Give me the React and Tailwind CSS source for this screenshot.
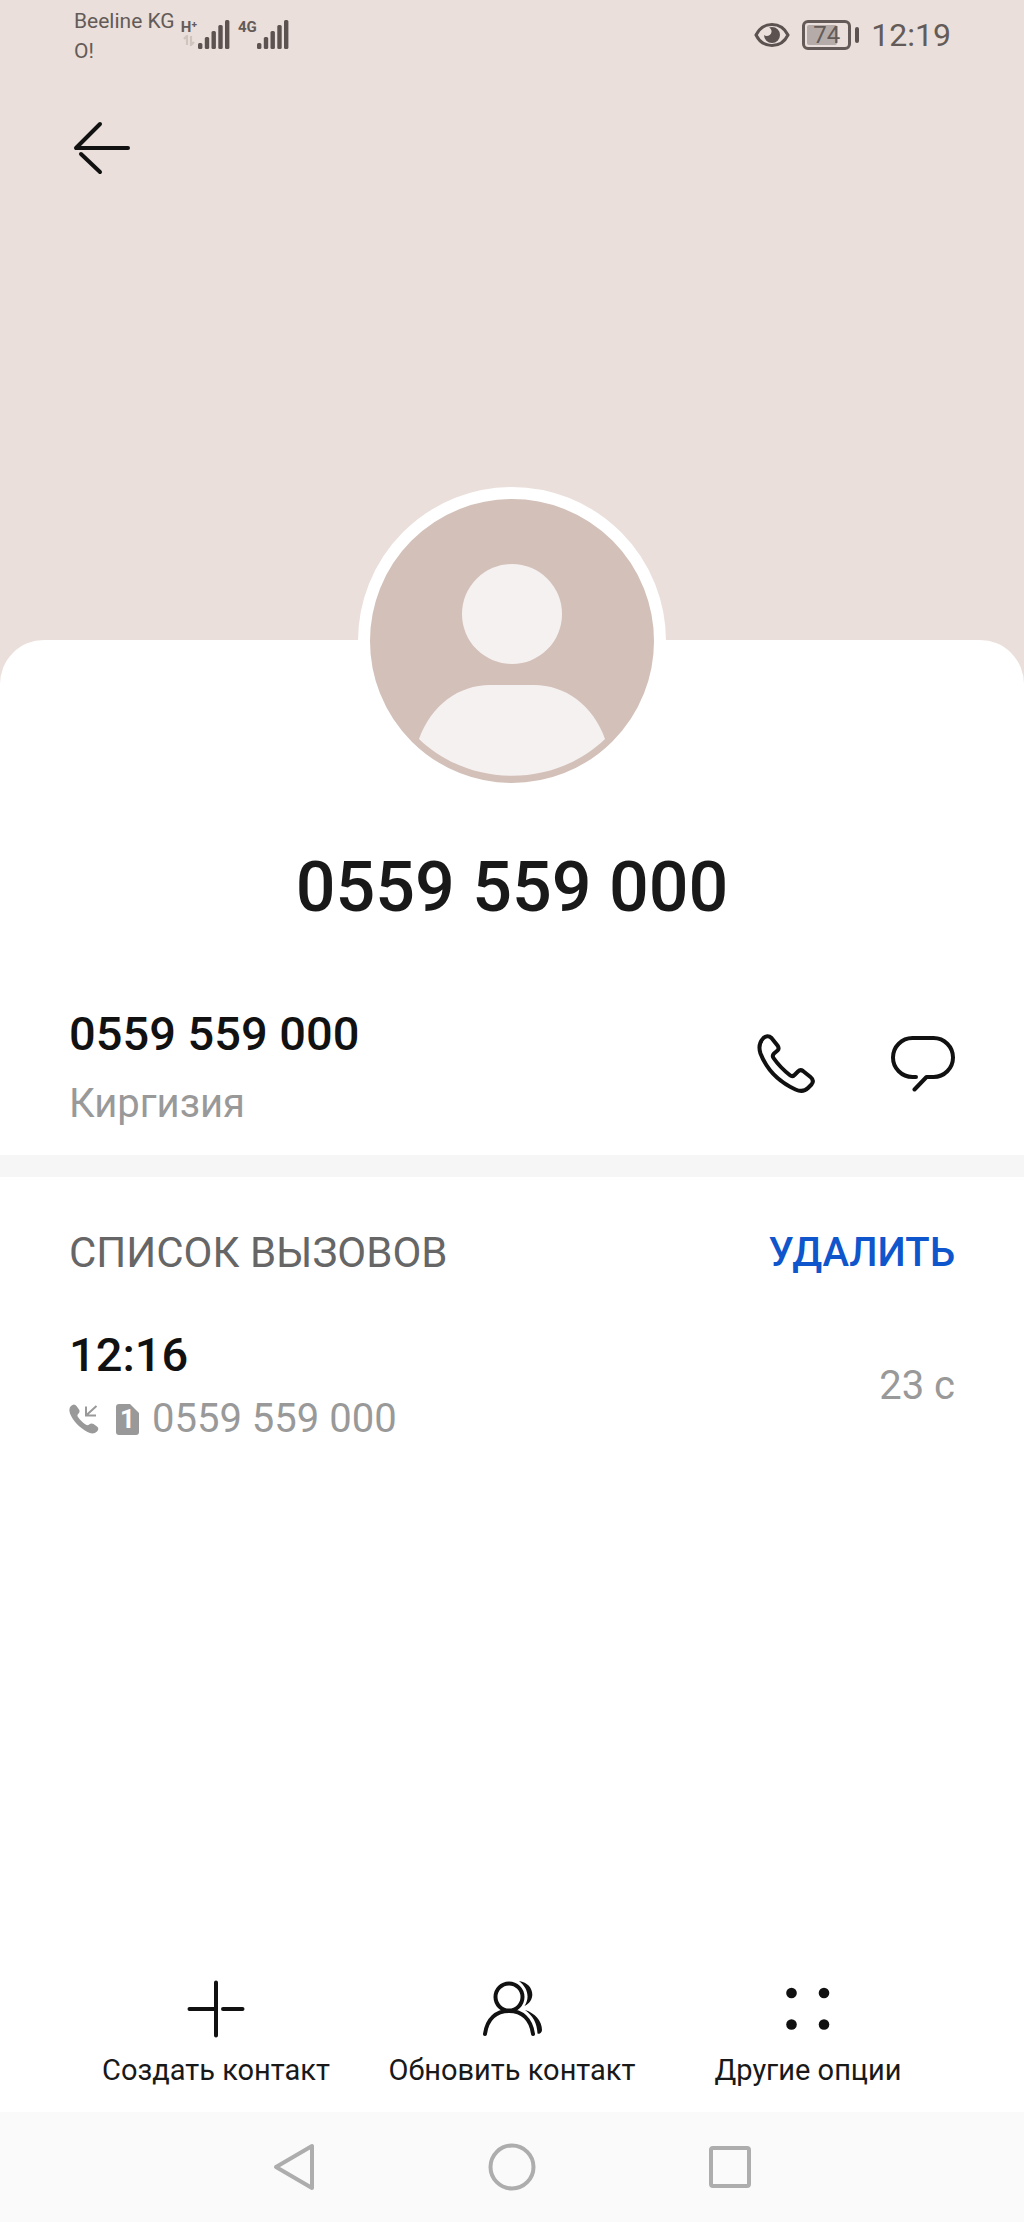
const calls = [
  { id: 1, time: "12:16", number: "0559 559 000", sim: 1, duration: "23 с" },
];

const SignalBars = () => (
  <svg width="32" height="30" viewBox="0 0 32 30" fill="#5c5250">
    <rect x="0" y="24" width="4.4" height="6" rx="1.5" />
    <rect x="6.8" y="18" width="4.4" height="12" rx="1.5" />
    <rect x="13.5" y="12" width="4.4" height="18" rx="1.5" />
    <rect x="20.3" y="6" width="4.4" height="24" rx="1.5" />
    <rect x="27" y="1" width="4.4" height="29" rx="1.5" />
  </svg>
);

const StatusBar = () => (
  <div className="flex h-[72px] items-start justify-between pl-[74px] pr-[73px] text-[#645b58]">
    <div className="flex items-start">
      <div className="w-[106px] whitespace-nowrap pt-[6px] text-[21px] leading-[30px]">
        <p>Beeline KG</p>
        <p>О!</p>
      </div>
      <div className="flex pt-[19px]">
        <div className="flex w-[18px] flex-col items-center">
          <span className="text-[15px] font-bold leading-[16px]">H⁺</span>
          <svg width="12" height="11" viewBox="0 0 12 11" fill="none" stroke="#cfc4be" strokeWidth="2.2">
            <path d="M1 4 L4 1 V10 M8 1 V10 L11 7" />
          </svg>
        </div>
        <SignalBars />
        <span className="ml-[8px] w-[19px] text-[15px] font-bold leading-[16px]">4G</span>
        <SignalBars />
      </div>
    </div>
    <div className="flex h-[70px] items-center">
      <svg width="36" height="26" viewBox="0 0 36 26" fill="none">
        <path d="M2 13 C9 -1 27 -1 34 13 C27 27 9 27 2 13 Z" stroke="#5c5250" strokeWidth="3" />
        <path d="M18 5 A8 8 0 1 1 10 13 C12 15 17 14 17.5 10 C18 8 16 6 15 5.6 Z" fill="#5c5250" />
      </svg>
      <div className="ml-[12px] flex h-[30px] w-[49px] items-center rounded-[6px] border-[3px] border-[#645b58] p-[2px]">
        <div className="flex h-full w-[30px] items-center whitespace-nowrap rounded-[2px] bg-[#b5acaa] pl-[6px] text-[24px]">
          74
        </div>
      </div>
      <div className="ml-[4px] h-[16px] w-[4px] rounded-sm bg-[#5c5250]" />
      <span className="ml-[12px] text-[32px]">12:19</span>
    </div>
  </div>
);

const Avatar = () => (
  <div className="mx-auto -mt-[153px] h-[308px] w-[308px] rounded-full border-[12px] border-white bg-[#d3c0b9]">
    <svg className="h-full w-full" viewBox="0 0 284 284" fill="#f5f1f0">
      <circle cx="142" cy="115" r="50" />
      <path d="M49 240 C61 206 89 186 120 186 H164 C195 186 223 206 235 240 C184 289 100 289 49 240 Z" />
    </svg>
  </div>
);

const PhoneIcon = () => (
  <svg width="58" height="59" viewBox="0 0 58 59" fill="none" stroke="#111" strokeWidth="4" strokeLinejoin="round">
    <path d="M6 4.5 C8.500 1.500 12 1.500 14.500 4 L20.500 11.500 C22 13.500 22 15 20.500 16.500 L17 19.500 C15.500 21 15.500 22.500 16.500 24 C21 30.500 27 36.500 33 41.300 C34.500 42.500 36 42.500 37.500 41 L41 37.500 C42.500 36 44.300 35.800 46 37 L53.500 43 C56.500 45.500 56.500 48 54.500 50.500 L51 54 C48 57 43 57.500 38.500 55.500 C22 48 9.500 35 3.500 19.500 C1.500 13.500 2 9 6 4.500 Z" />
  </svg>
);

const MessageIcon = () => (
  <svg width="64" height="57" viewBox="0 0 64 57" fill="none" stroke="#111" strokeWidth="4" strokeLinecap="round" strokeLinejoin="round">
    <path d="M25 42 H21.500 A19.500 19.500 0 0 1 21.500 3 H42.500 A19.500 19.500 0 0 1 42.500 42 H35.500 L23.500 54.500" />
  </svg>
);

const IncomingCallIcon = () => (
  <svg width="30" height="30" viewBox="0 0 30 30" fill="none">
    <path d="M2 2 C4 0 6 0 7.500 2 L10 5.500 C11 7 10.500 8.500 9.500 9.500 C8 11 8.300 12 9 13 C11 16 14 19 17 20.800 C18.300 21.500 19.200 21.500 20.500 20.300 C21.500 19.300 23 19 24.500 20 L28 22.500 C30 24 29.500 26 28 27.500 C25.500 30 22 30 18.500 28 C10.500 23.500 4 17 1 9.500 C0 6.500 0 4 2 2 Z" fill="#999" />
    <path d="M27.500 2 L17 11.500 M17 2.500 V11.500 H27" stroke="#999" strokeWidth="2" />
  </svg>
);

// sim card outline with the slot number inside
const SimBadge = ({ slot }) => (
  <span className="relative flex h-[31px] w-[23px] items-center justify-center">
    <svg className="absolute inset-0" width="23" height="31" viewBox="0 0 23 31" fill="#999">
      <path d="M3 0 H14 L23 9 V28 Q23 31 20 31 H3 Q0 31 0 28 V3 Q0 0 3 0 Z" />
    </svg>
    <span className="relative text-[26px] font-bold leading-none text-white">{slot}</span>
  </span>
);

const PlusIcon = () => (
  <svg width="58" height="58" viewBox="0 0 58 58" stroke="#111" strokeWidth="4" strokeLinecap="round">
    <path d="M29 2.500 V55.500 M2.500 29 H28 M36 29 H55.500" />
  </svg>
);

const PeopleIcon = () => (
  <svg width="62" height="58" viewBox="0 0 62 58" fill="none" stroke="#111" strokeWidth="4" strokeLinecap="round">
    <circle cx="28" cy="17" r="13.500" />
    <path d="M4 54 C6 39 15 31 28 31 C41 31 50 39 52 54" />
    <path d="M38 1 C53 3 56 20 43.500 26 C49 18 47 8 38 1 Z M44 30 C54 33 61 41 61 50 C61 53 58 54.500 56.500 53.500 C56 43 52 36 44 30 Z" fill="#111" stroke="none" />
  </svg>
);

const DotsIcon = () => (
  <svg width="58" height="58" viewBox="0 0 58 58" fill="#111">
    <circle cx="12.500" cy="13" r="5.300" />
    <circle cx="45" cy="13" r="5.300" />
    <circle cx="12.500" cy="44.500" r="5.300" />
    <circle cx="45" cy="44.500" r="5.300" />
  </svg>
);

const actions = [
  { label: "Создать контакт", icon: <PlusIcon /> },
  { label: "Обновить контакт", icon: <PeopleIcon /> },
  { label: "Другие опции", icon: <DotsIcon /> },
];

const NavBar = () => (
  <nav className="grid h-[110px] grid-cols-3 items-center bg-[#fafafa] px-[18%]">
    <button aria-label="Back" className="flex justify-center">
      <svg width="42" height="48" viewBox="0 0 42 48" fill="none" stroke="#adadad" strokeWidth="4" strokeLinejoin="round">
        <path d="M39 3 V45 L3 24 Z" />
      </svg>
    </button>
    <button aria-label="Home" className="flex justify-center">
      <svg width="48" height="48" viewBox="0 0 48 48" fill="none" stroke="#adadad" strokeWidth="4">
        <circle cx="24" cy="24" r="21.500" />
      </svg>
    </button>
    <button aria-label="Recent" className="flex justify-center">
      <svg width="44" height="44" viewBox="0 0 44 44" fill="none" stroke="#adadad" strokeWidth="4">
        <rect x="3" y="3" width="38" height="38" rx="2" />
      </svg>
    </button>
  </nav>
);

const App = () => {
  return (
    <div className="flex min-h-screen flex-col bg-[#eadfda] font-[Roboto,'Noto_Sans',sans-serif]">
      <header className="h-[640px]">
        <StatusBar />
        <button aria-label="Назад" className="ml-[73px] mt-[48px] block">
          <svg width="58" height="56" viewBox="0 0 58 56" fill="none" stroke="#111" strokeWidth="4" strokeLinecap="round" strokeLinejoin="round">
            <path d="M27 4 L3 28 H55 M8 34 L27 52" />
          </svg>
        </button>
      </header>

      <main className="flex flex-1 flex-col rounded-t-[44px] bg-white">
        <Avatar />
        <h1 className="mt-[50px] text-center text-[70px] font-medium leading-[84px] text-[#191919]">
          0559 559 000
        </h1>

        <section className="mt-[75px] flex items-start justify-between px-[69px]">
          <div>
            <p className="text-[47px] font-medium leading-[60px] text-[#111]">0559 559 000</p>
            <p className="mt-[12px] text-[40px] leading-[56px] text-[#999]">Киргизия</p>
          </div>
          <div className="flex items-center gap-[76px] pt-[30px]">
            <button aria-label="Позвонить"><PhoneIcon /></button>
            <button aria-label="Сообщение"><MessageIcon /></button>
          </div>
        </section>

        <div className="mt-[23px] h-[22px] bg-[#f6f6f6]" />

        <section className="px-[69px] pt-[48px]">
          <div className="flex items-center justify-between leading-[56px]">
            <h2 className="text-[42px] text-[#666]">СПИСОК ВЫЗОВОВ</h2>
            <button className="text-[40px] font-medium text-[#0f55cc]">УДАЛИТЬ</button>
          </div>
          <ul className="mt-[44px]">
            {calls.map((call) => (
              <li key={call.id} className="flex items-center justify-between">
                <div>
                  <p className="text-[47px] font-medium leading-[60px] text-[#111]">{call.time}</p>
                  <div className="mt-[6px] flex items-center text-[40px] leading-[56px] text-[#999]">
                    <IncomingCallIcon />
                    <span className="ml-[17px] mr-[13px]"><SimBadge slot={call.sim} /></span>
                    {call.number}
                  </div>
                </div>
                <span className="text-[40px] text-[#999]">{call.duration}</span>
              </li>
            ))}
          </ul>
        </section>

        <div className="mt-auto grid grid-cols-3 px-[68px] pb-[24px] pt-[24px]">
          {actions.map((action) => (
            <button key={action.label} className="flex flex-col items-center gap-[14px] whitespace-nowrap text-[29px] leading-[36px] text-[#191919]">
              {action.icon}
              {action.label}
            </button>
          ))}
        </div>
        <NavBar />
      </main>
    </div>
  );
};

export default App;
